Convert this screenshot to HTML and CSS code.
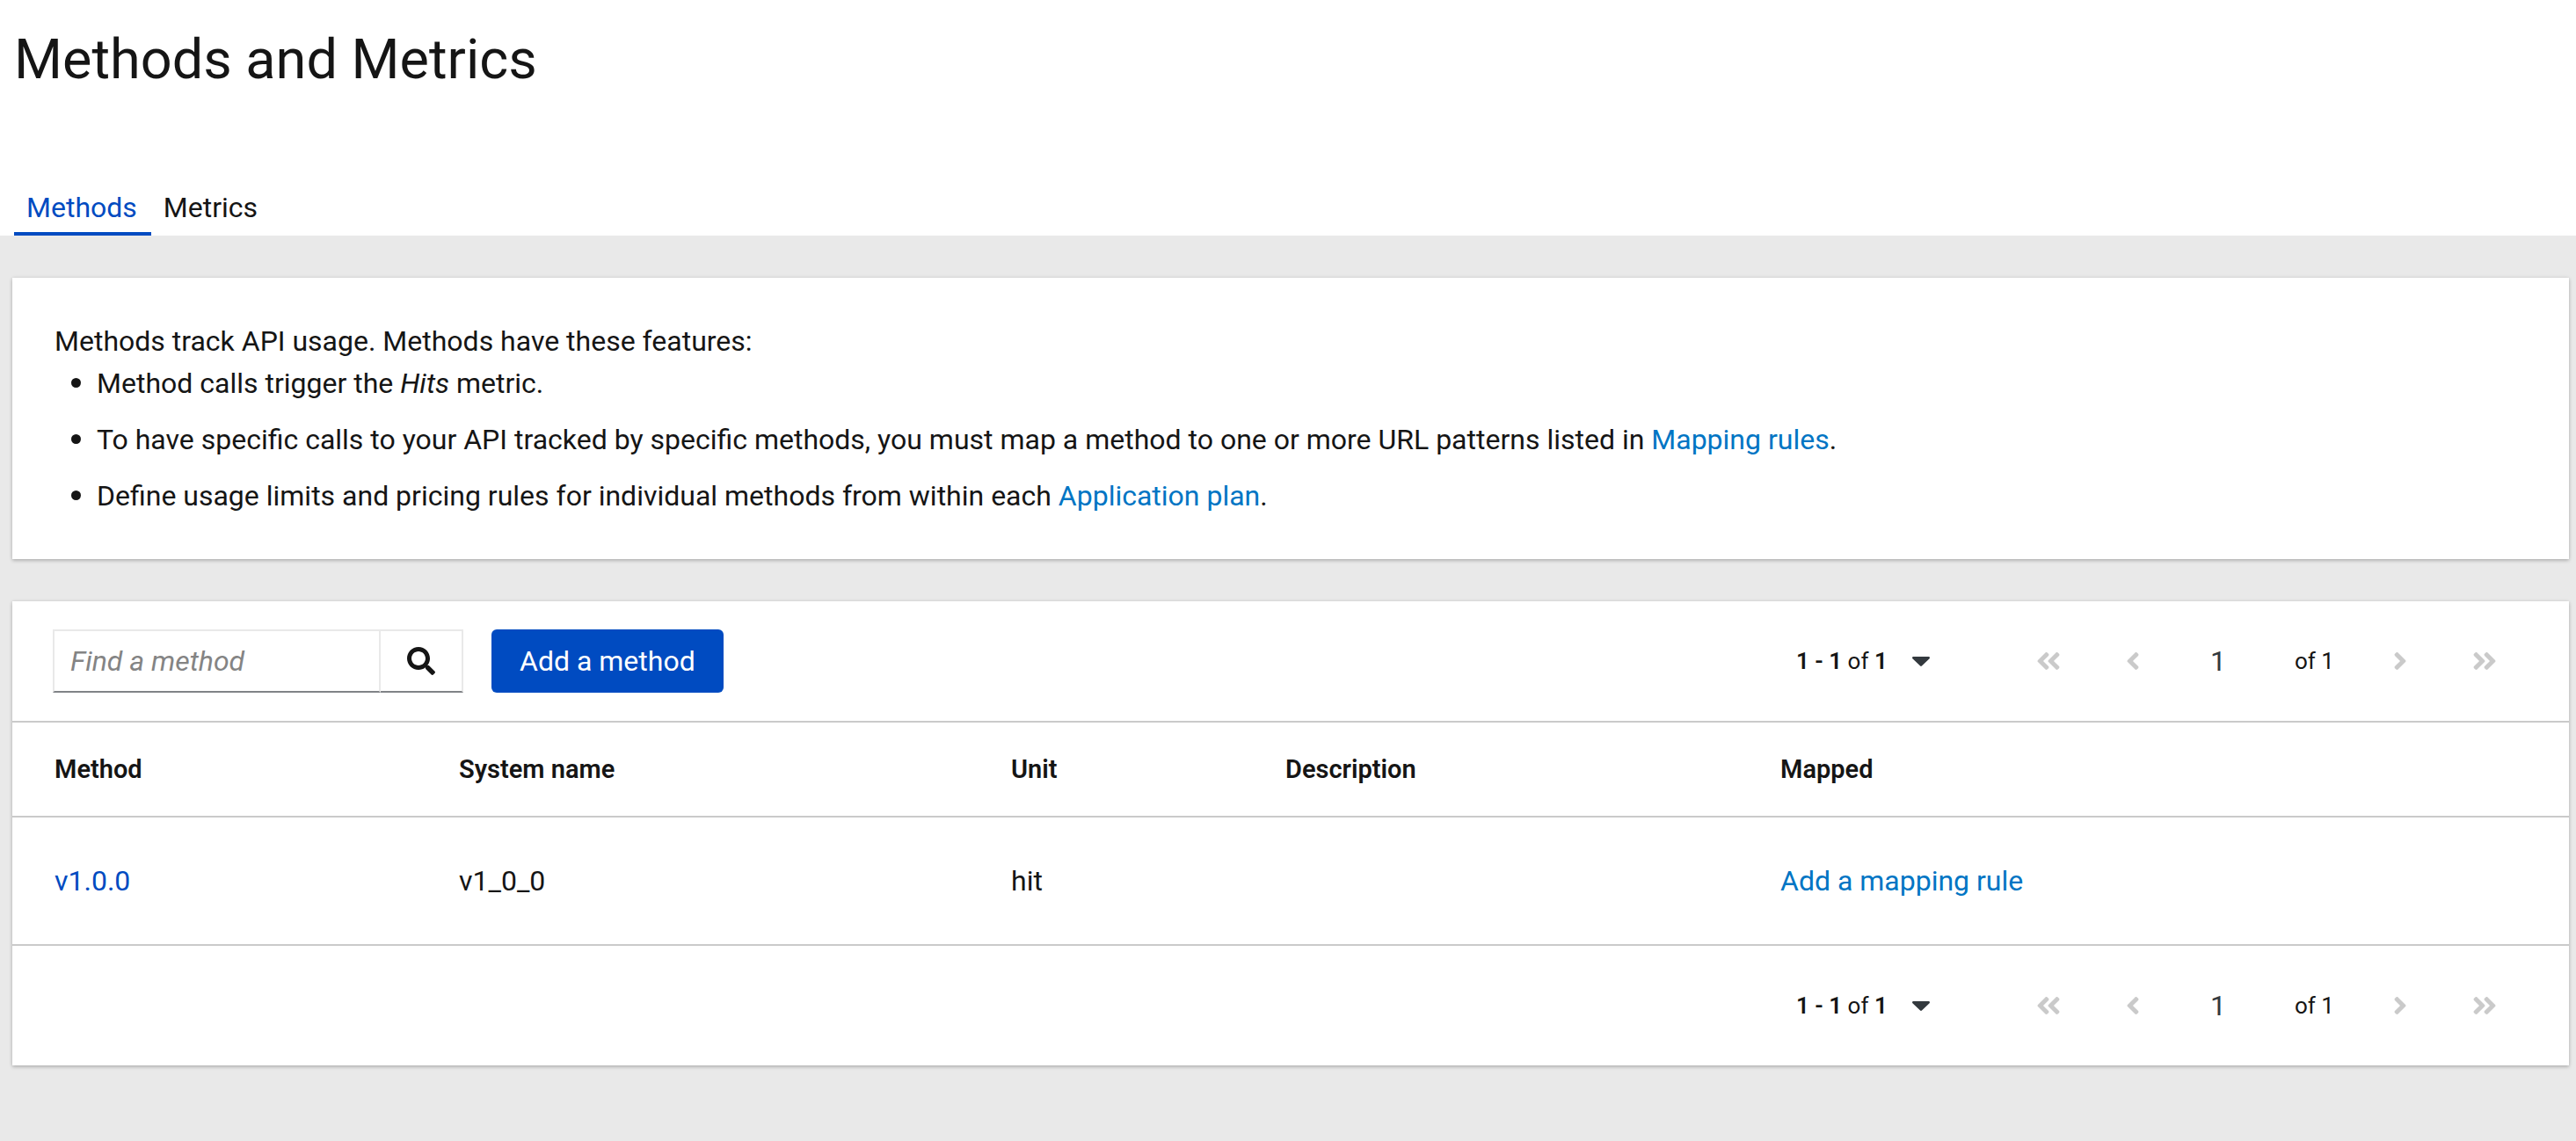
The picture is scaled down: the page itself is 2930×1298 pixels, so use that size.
FILE: index.html
```html
<!DOCTYPE html>
<html lang="en">
<head>
<meta charset="utf-8">
<title>Methods and Metrics</title>
<link rel="stylesheet" href="styles.css">
</head>
<body>
<svg class="sprite" aria-hidden="true">
  <symbol id="search" viewBox="0 0 512 512"><path d="M505 442.700L405.300 343c-4.500-4.500-10.600-7-17-7H372c27.600-35.300 44-79.700 44-128C416 93.100 322.900 0 208 0S0 93.100 0 208s93.100 208 208 208c48.300 0 92.700-16.400 128-44v16.300c0 6.400 2.500 12.500 7 17l99.700 99.700c9.400 9.400 24.600 9.400 33.900 0l28.300-28.300c9.400-9.400 9.400-24.600.1-34zM208 336c-70.700 0-128-57.200-128-128 0-70.700 57.200-128 128-128 70.700 0 128 57.200 128 128 0 70.700-57.200 128-128 128z"/></symbol>
  <symbol id="caret" viewBox="0 0 20 11"><path d="M1.300 0h17.400c1.100 0 1.700 1.400.9 2.200l-8.700 8.400c-.5.500-1.300.5-1.800 0L.4 2.200C-.4 1.400.200 0 1.300 0z"/></symbol>
  <symbol id="left" viewBox="0 0 256 512"><path d="M31.700 239l136-136c9.400-9.400 24.600-9.400 33.900 0l22.600 22.600c9.400 9.400 9.400 24.600 0 33.900L127.900 256l96.400 96.400c9.400 9.400 9.400 24.600 0 33.900L201.700 409c-9.400 9.400-24.600 9.400-33.900 0l-136-136c-9.500-9.400-9.500-24.600-.1-34z"/></symbol>
  <symbol id="right" viewBox="0 0 256 512"><path d="M224.300 273l-136 136c-9.400 9.400-24.600 9.400-33.900 0l-22.600-22.600c-9.400-9.400-9.400-24.600 0-33.900l96.400-96.400-96.400-96.400c-9.400-9.400-9.400-24.600 0-33.900L54.300 103c9.400-9.400 24.600-9.400 33.900 0l136 136c9.500 9.400 9.500 24.600.1 34z"/></symbol>
</svg>

<header class="page-header">
  <h1 class="title">Methods and Metrics</h1>
  <nav class="tabs" aria-label="Methods and metrics">
    <a class="tab tab-current" href="#methods" aria-current="page">Methods</a>
    <a class="tab" href="#metrics">Metrics</a>
  </nav>
</header>

<main class="content">
  <section class="card intro">
    <p class="intro-lead">Methods track API usage. Methods have these features:</p>
    <ul class="features">
      <li>Method calls trigger the <em>Hits</em> metric.</li>
      <li>To have specific calls to your API tracked by specific methods, you must map a method to one or more URL patterns listed in <a class="link" href="#mapping-rules">Mapping rules</a>.</li>
      <li>Define usage limits and pricing rules for individual methods from within each <a class="link" href="#plans">Application plan</a>.</li>
    </ul>
  </section>

  <section class="card">
    <div class="toolbar">
      <form class="search">
        <input class="search-field" type="search" placeholder="Find a method" aria-label="Find a method">
        <button class="search-button" type="button" aria-label="Search"><svg class="icon-search"><use href="#search"/></svg></button>
      </form>
      <button class="button-primary" type="button">Add a method</button>
      <div class="pagination">
        <button class="range" type="button"><span class="range-text"><b>1 - 1</b> of <b>1</b></span><svg class="icon-caret"><use href="#caret"/></svg></button>
        <button class="step" type="button" disabled aria-label="First page"><svg class="icon-angle"><use href="#left"/></svg><svg class="icon-angle"><use href="#left"/></svg></button>
        <button class="step" type="button" disabled aria-label="Previous page"><svg class="icon-angle"><use href="#left"/></svg></button>
        <input class="page-field" type="text" value="1" aria-label="Current page">
        <span class="page-count">of 1</span>
        <button class="step" type="button" disabled aria-label="Next page"><svg class="icon-angle"><use href="#right"/></svg></button>
        <button class="step" type="button" disabled aria-label="Last page"><svg class="icon-angle"><use href="#right"/></svg><svg class="icon-angle"><use href="#right"/></svg></button>
      </div>
    </div>

    <table class="methods">
      <colgroup><col class="col-method"><col class="col-system"><col class="col-unit"><col class="col-description"><col></colgroup>
      <thead>
        <tr><th scope="col">Method</th><th scope="col">System name</th><th scope="col">Unit</th><th scope="col">Description</th><th scope="col">Mapped</th></tr>
      </thead>
      <tbody>
        <tr><td><a class="link-method" href="#v1">v1.0.0</a></td><td>v1_0_0</td><td>hit</td><td></td><td><a class="link" href="#add-rule">Add a mapping rule</a></td></tr>
      </tbody>
    </table>

    <div class="toolbar">
      <div class="pagination">
        <button class="range" type="button"><span class="range-text"><b>1 - 1</b> of <b>1</b></span><svg class="icon-caret"><use href="#caret"/></svg></button>
        <button class="step" type="button" disabled aria-label="First page"><svg class="icon-angle"><use href="#left"/></svg><svg class="icon-angle"><use href="#left"/></svg></button>
        <button class="step" type="button" disabled aria-label="Previous page"><svg class="icon-angle"><use href="#left"/></svg></button>
        <input class="page-field" type="text" value="1" aria-label="Current page">
        <span class="page-count">of 1</span>
        <button class="step" type="button" disabled aria-label="Next page"><svg class="icon-angle"><use href="#right"/></svg></button>
        <button class="step" type="button" disabled aria-label="Last page"><svg class="icon-angle"><use href="#right"/></svg><svg class="icon-angle"><use href="#right"/></svg></button>
      </div>
    </div>
  </section>
</main>
</body>
</html>
```
FILE: styles.css
```css
* { box-sizing: border-box; }

body {
  margin: 0;
  background: #e9e9e9;
  color: #151515;
  font: 400 32px/48px Roboto, "Liberation Sans", sans-serif;
}

button, input { margin: 0; padding: 0; border: 0; border-radius: 0; background: none; color: inherit; font: inherit; }

a { text-decoration: none; }
svg { fill: currentColor; }

.sprite { display: none; }

.page-header { padding: 28px 16px 0; background: #fff; }
.title { margin: 0 0 104px; font-size: 63px; font-weight: 400; line-height: 80px; }

.tabs { display: flex; }
.tab { padding: 0 16px 4px 14px; border-bottom: 4px solid transparent; color: #151515; }
.tab-current { border-color: #004bc1; color: #004bc1; }

.content { display: flex; flex-direction: column; gap: 48px; padding: 48px 8px 84px 14px; }
.card { background: #fff; box-shadow: 0 2px 4px rgba(3, 3, 3, 0.2), 0 0 4px rgba(3, 3, 3, 0.1); }

.intro { padding: 48px; }
.intro-lead { margin: 0; }
.features { display: flex; flex-direction: column; gap: 16px; margin: 0; padding: 0 0 0 48px; list-style: none; }
.features li { position: relative; }
.features li::before { content: ""; position: absolute; top: 18px; left: -29px; width: 11px; height: 11px; border-radius: 50%; background: #151515; }

.link { color: #0075c4; }
.link-method { color: #004bc1; }

.toolbar { display: flex; align-items: center; min-height: 136px; padding: 0 48px 0 46px; }

.search { display: flex; margin-right: 32px; }
.search-field { width: 373px; height: 72px; padding: 0 18px; border: 2px solid #e9e9e9; border-bottom-color: #808387; }
.search-field::placeholder { color: #848484; font-style: italic; opacity: 1; }
.search-button { display: flex; align-items: center; justify-content: center; width: 94px; height: 72px; border: 2px solid #e9e9e9; border-left: 0; border-bottom-color: #808387; }
.icon-search { width: 32px; height: 32px; }

.button-primary { height: 72px; padding: 0 32px; border-radius: 6px; background: #004bc1; color: #fff; }

.pagination { display: flex; align-items: center; margin-left: auto; font-size: 26px; }
.range { display: flex; align-items: center; justify-content: space-between; width: 152px; margin-right: 87px; }
.range b { font-weight: 600; }
.icon-caret { width: 20px; height: 11px; color: #33393e; }
.step { display: flex; justify-content: center; width: 96px; color: #cacaca; }
.icon-angle { width: 16px; height: 32px; }
.icon-angle + .icon-angle { margin-left: -4px; }
.page-field { width: 98px; margin-right: 38px; color: #33393e; font-size: 32px; text-align: center; }
.page-count { min-width: 72px; }

.methods { width: 100%; border-collapse: collapse; table-layout: fixed; text-align: left; }
.methods th, .methods td { padding: 0 0 0 48px; border-top: 2px solid #cacaca; border-bottom: 2px solid #cacaca; }
.methods th { height: 108px; font-size: 29px; font-weight: 600; }
.methods td { height: 146px; }
.methods th + th, .methods td + td { padding-left: 0; }
.col-method { width: 508px; }
.col-system { width: 628px; }
.col-unit { width: 312px; }
.col-description { width: 563px; }
```
